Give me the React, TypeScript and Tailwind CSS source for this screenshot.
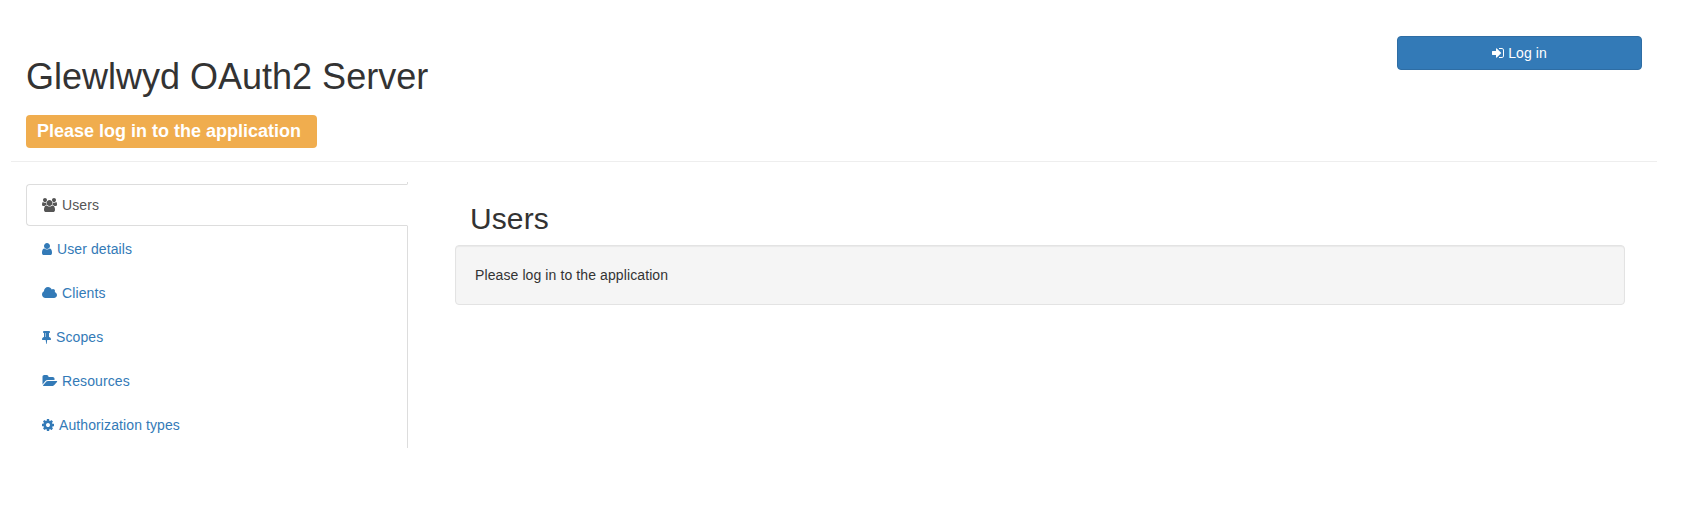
type IconProps = { path: string; viewBox: string; className: string };

function Icon({ path, viewBox, className }: IconProps) {
  return (
    <svg viewBox={viewBox} className={`inline-block h-[14px] shrink-0 overflow-visible fill-current ${className}`} aria-hidden="true">
      <path d={path} />
    </svg>
  );
}

const signIn =
  "M1312 896q0 26-19 45l-544 544q-19 19-45 19t-45-19-19-45v-288h-448q-26 0-45-19t-19-45v-384q0-26 19-45t45-19h448v-288q0-26 19-45t45-19 45 19l544 544q19 19 19 45zm352-352v704q0 119-84.5 203.5t-203.5 84.5h-320q-13 0-22.5-9.5t-9.5-22.5q0-4-1-20t-.5-26.5 3-23.5 10-19.5 20.5-6.5h320q66 0 113-47t47-113v-704q0-66-47-113t-113-47h-312l-11.5-1-11.5-3-8-5.5-7-9-2-13.5q0-4-1-20t-.5-26.5 3-23.5 10-19.5 20.5-6.5h320q119 0 203.5 84.5t84.5 203.5z";

const tabs = [
  {
    label: "Users",
    width: "w-[15px]",
    viewBox: "0 0 1920 1792",
    path: "M593 896q-162 5-265 128h-134q-82 0-138-40.5t-56-118.5q0-353 124-353 6 0 43.5 21t97.5 42.5 119 21.5q67 0 133-23-5 37-5 66 0 159 93 256zm1071 637q0 120-73 189.5t-194 69.5h-874q-121 0-194-69.5t-73-189.5q0-53 3.5-103.5t14-109 26.5-108.5 43-97.5 62-81 85.5-53.5 111.5-20q10 0 43 21.5t73 48 107 48 135 21.5 135-21.5 107-48 73-48 43-21.5q61 0 111.5 20t85.5 53.5 62 81 43 97.5 26.5 108.5 14 109 3.5 103.5zm-1024-1277q0 106-75 181t-181 75-181-75-75-181 75-181 181-75 181 75 75 181zm704 384q0 159-112.5 271.5t-271.5 112.5-271.5-112.5-112.5-271.5 112.5-271.5 271.5-112.5 271.5 112.5 112.5 271.5zm576 225q0 78-56 118.5t-138 40.5h-134q-103-123-265-128 93-97 93-256 0-29-5-66 66 23 133 23 59 0 119-21.5t97.5-42.5 43.5-21q124 0 124 353zm-128-609q0 106-75 181t-181 75-181-75-75-181 75-181 181-75 181 75 75 181z",
  },
  {
    label: "User details",
    width: "w-[10px]",
    viewBox: "256 0 1280 1792",
    path: "M1536 1399q0 109-62.5 187t-150.5 78h-854q-88 0-150.5-78t-62.5-187q0-85 8.5-160.5t31.5-152 58.5-131 94-89 134.5-34.5q131 128 313 128t313-128q76 0 134.5 34.5t94 89 58.5 131 31.5 152 8.5 160.5zm-256-887q0 159-112.5 271.5t-271.5 112.5-271.5-112.5-112.5-271.5 112.5-271.5 271.5-112.5 271.5 112.5 112.5 271.5z",
  },
  {
    label: "Clients",
    width: "w-[15px]",
    viewBox: "64 0 1920 1792",
    path: "M1984 1152q0 159-112.5 271.5t-271.5 112.5h-1088q-185 0-316.5-131.5t-131.5-316.5q0-132 71-241.5t187-163.5q-2-28-2-43 0-212 150-362t362-150q158 0 286.5 88t187.5 230q70-62 166-62 106 0 181 75t75 181q0 75-41 138 129 30 213 134.5t84 239.5z",
  },
  {
    label: "Scopes",
    width: "w-[9px]",
    viewBox: "320 0 1152 1792",
    path: "M800 864v-448q0-14-9-23t-23-9-23 9-9 23v448q0 14 9 23t23 9 23-9 9-23zm672 352q0 26-19 45t-45 19h-429l-51 483q-2 12-10.5 20.5t-20.5 8.5h-1q-27 0-32-27l-76-485h-404q-26 0-45-19t-19-45q0-123 78.5-221.5t177.5-98.5v-512q-52 0-90-38t-38-90 38-90 90-38h640q52 0 90 38t38 90-38 90-90 38v512q99 0 177.5 98.5t78.5 221.5z",
  },
  {
    label: "Resources",
    width: "w-[15px]",
    viewBox: "0 0 1920 1792",
    path: "M1943 952q0 31-31 66l-336 396q-43 51-120.5 86.5t-143.5 35.5h-1088q-34 0-60.5-13t-26.5-43q0-31 31-66l336-396q43-51 120.5-86.5t143.5-35.5h1088q34 0 60.5 13t26.5 43zm-343-344v160h-832q-94 0-197 47.5t-164 119.5l-337 396-5 6q0-4-.5-12.5t-.5-12.5v-960q0-92 66-158t158-66h320q92 0 158 66t66 158v32h544q92 0 158 66t66 158z",
  },
  {
    label: "Authorization types",
    width: "w-[12px]",
    viewBox: "128 0 1536 1792",
    path: "M1152 896q0-106-75-181t-181-75-181 75-75 181 75 181 181 75 181-75 75-181zm512-109v222q0 12-8 23t-20 13l-185 28q-19 54-39 91 35 50 107 138 10 12 10 25t-9 23q-27 37-99 108t-94 71q-12 0-26-9l-138-108q-44 23-91 38-16 136-29 186-7 28-36 28h-222q-14 0-24.5-8.5t-11.5-21.5l-28-184q-49-16-90-37l-141 107q-10 9-25 9-14 0-25-11-126-114-165-168-7-10-7-23 0-12 8-23 15-21 51-66.5t54-70.5q-27-50-41-99l-183-27q-13-2-21-12.5t-8-23.5v-222q0-12 8-23t19-13l186-28q14-46 39-92-40-57-107-138-10-12-10-24 0-10 9-23 26-36 98.5-107.5t94.5-71.5q13 0 26 10l138 107q44-23 91-38 16-136 29-186 7-28 36-28h222q14 0 24.5 8.5t11.5 21.5l28 184q49 16 90 37l142-107q9-9 24-9 13 0 25 10 129 119 165 170 7 8 7 22 0 12-8 23-15 21-51 66.5t-54 70.5q26 50 41 98l183 28q13 2 21 12.5t8 23.5z",
  },
];

export default function App() {
  return (
    <div className="min-h-[512px] bg-white pt-[36px] pr-[45px] pl-[11px] font-['Liberation_Sans',sans-serif] text-[14px] leading-5 tracking-[0.1px] text-[#333]">
      <header className="flex h-[126px] items-start justify-between border-b border-[#eee] px-[15px]">
        <div>
          <h1 className="mt-[21px] text-[36px] leading-[40px] font-medium tracking-normal whitespace-nowrap">Glewlwyd OAuth2 Server</h1>
          <div className="mt-[18px] flex h-[33px] w-[291px] items-center rounded-[4px] bg-[#f0ad4e] pb-[2px] pl-[11px] text-[18px] leading-[18px] font-bold tracking-normal whitespace-nowrap text-white">
            Please log in to the application
          </div>
        </div>
        <button className="flex h-[34px] w-[245px] items-center justify-center gap-1 rounded-[4px] border border-[#2e6da4] bg-[#337ab7] text-white">
          <Icon path={signIn} viewBox="128 0 1536 1792" className="w-[12px]" />
          Log in
        </button>
      </header>

      <div className="mt-5 flex items-start pl-[15px]">
        <ul className="w-[382px] border-r border-[#ddd] pt-[2px]">
          {tabs.map((tab, i) => (
            <li key={tab.label} className="-mr-px mb-[2px]">
              <a
                href="#"
                className={
                  i === 0
                    ? "flex h-[42px] items-center gap-[5px] rounded-l-[4px] border border-[#ddd] border-r-white bg-white pl-[15px] text-[#555]"
                    : "flex h-[42px] items-center gap-[5px] border border-transparent pl-[15px] text-[#337ab7]"
                }
              >
                <Icon path={tab.path} viewBox={tab.viewBox} className={tab.width} />
                {tab.label}
              </a>
            </li>
          ))}
        </ul>
        <main className="mr-[32px] ml-[47px] flex-1">
          <h2 className="mt-[20px] mb-[10px] pl-[15px] text-[30px] leading-[33px] font-medium">Users</h2>
          <div className="h-[60px] rounded-[4px] border border-[#e3e3e3] bg-[#f5f5f5] p-[19px] shadow-[inset_0_1px_1px_rgba(0,0,0,0.05)]">
            Please log in to the application
          </div>
        </main>
      </div>
    </div>
  );
}
